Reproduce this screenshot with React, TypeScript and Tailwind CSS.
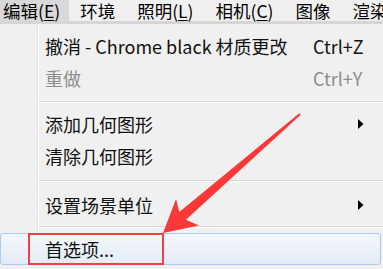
import React from 'react';

const font = "font-['Noto_Sans_CJK_SC','Noto_Sans',sans-serif]";

const Mnemonic: React.FC<{ k: string }> = ({ k }) => (
  <span>
    (<span className="underline underline-offset-2">{k}</span>)
  </span>
);

const SubArrow = () => (
  <svg width="6" height="10" viewBox="0 0 6 10" className="ml-[45px]">
    <path d="M0 0 L5.5 5 L0 10 Z" fill="#000" />
  </svg>
);

interface RowProps {
  label: React.ReactNode;
  right?: React.ReactNode;
  disabled?: boolean;
}

const Row: React.FC<RowProps> = ({ label, right, disabled }) => (
  <div className="flex h-[32px]">
    <div className="w-[38px] shrink-0 border-r border-[#e2e3e3]" />
    <div
      className={`flex flex-1 items-center border-l border-white pl-[6px] ${
        disabled ? 'text-[#8d8d8d]' : 'text-[#111]'
      }`}
    >
      <span className="flex-1 whitespace-nowrap">{label}</span>
      <span className="flex w-[70px] shrink-0 items-center">{right}</span>
    </div>
  </div>
);

const Separator: React.FC<{ h: string; top: string }> = ({ h, top }) => (
  <div className={`flex ${h}`}>
    <div className="w-[38px] shrink-0 border-r border-[#e2e3e3]" />
    <div className={`flex-1 border-l border-white ${top}`}>
      <div className="h-px bg-[#d7d7d7]" />
      <div className="h-px bg-white" />
    </div>
  </div>
);

export default function App() {
  return (
    <div
      className={`relative h-[269px] w-[383px] overflow-hidden bg-[#f0f0f0] text-[18px] leading-none ${font}`}
    >
      {/* menu bar */}
      <div className="flex h-[21px] items-center whitespace-nowrap bg-[#f0f0f0] text-[17.5px] text-black">
        <div className="flex h-full items-center bg-[#d9d9d9] pl-[3px] pr-[9px]">
          编辑<Mnemonic k="E" />
        </div>
        <div className="px-[11px]">环境</div>
        <div className="px-[11px]">
          照明<Mnemonic k="L" />
        </div>
        <div className="px-[11px]">
          相机<Mnemonic k="C" />
        </div>
        <div className="px-[11px]">图像</div>
        <div className="px-[11px]">渲染</div>
      </div>
      <div className="h-[3px] bg-[#d6d6d6]" />

      {/* dropdown */}
      <div className="flex flex-col">
        <div className="flex h-[6px]">
          <div className="w-[38px] shrink-0 border-r border-[#e2e3e3]" />
          <div className="flex-1 border-l border-white" />
        </div>
        <Row label="撤消 - Chrome black 材质更改" right="Ctrl+Z" />
        <Row label="重做" right="Ctrl+Y" disabled />
        <Separator h="h-[14px]" top="pt-[7px]" />
        <Row label="添加几何图形" right={<SubArrow />} />
        <Row label="清除几何图形" />
        <Separator h="h-[17px]" top="pt-[8px]" />
        <Row label="设置场景单位" right={<SubArrow />} />
        <Separator h="h-[12px]" top="pt-[5px]" />
        <div className="mr-[2px] flex h-[32px] items-center rounded-[3px] border border-[#aecbef] bg-gradient-to-b from-[#f4f7fc] to-[#e4ebf6] pl-[44px] text-[#111]">
          首选项...
        </div>
      </div>

      {/* annotation */}
      <div className="absolute left-[28px] top-[233px] h-[32px] w-[136px] border-2 border-[#ef4040]" />
      <svg
        className="absolute left-0 top-0"
        width="383"
        height="269"
        viewBox="0 0 383 269"
      >
        <polygon
          points="163,233 176,199 179.3,212.1 299.3,113.2 300.7,114.8 185.9,219.7 199,225.6"
          fill="#fb3838"
        />
      </svg>
    </div>
  );
}
